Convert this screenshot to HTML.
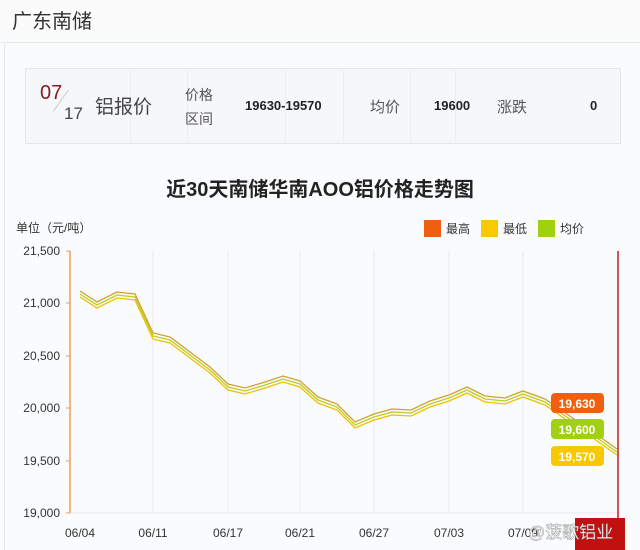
<!DOCTYPE html>
<html><head><meta charset="utf-8"><style>
body{margin:0;width:640px;height:550px;overflow:hidden;background:#fafbfc;font-family:"Liberation Sans","Noto Sans CJK SC",sans-serif;position:relative}
.abs{position:absolute}
</style></head><body>
<div class="abs" style="left:0;top:0;width:640px;height:42px;background:#fbfbfc;border-bottom:1px solid #e8e9ec"></div>
<div class="abs" style="left:12px;top:5px;font-size:20px;color:#333">广东南储</div>
<div class="abs" style="left:4px;top:43px;width:636px;height:507px;background:#fafbfd;border-left:1px solid #e6e7ea"></div>
<div class="abs" style="left:25px;top:68px;width:594px;height:74px;background:#f6f7fa;border:1px solid #e4e6ea"></div>
<div class="abs" style="left:130px;top:70px;width:1px;height:72px;background:#eceef2"></div>
<div class="abs" style="left:187px;top:70px;width:1px;height:72px;background:#eceef2"></div>
<div class="abs" style="left:285px;top:70px;width:1px;height:72px;background:#eceef2"></div>
<div class="abs" style="left:343px;top:70px;width:1px;height:72px;background:#eceef2"></div>
<div class="abs" style="left:410px;top:70px;width:1px;height:72px;background:#eceef2"></div>
<div class="abs" style="left:455px;top:70px;width:1px;height:72px;background:#eceef2"></div>
<div class="abs" style="left:40px;top:82px;font-size:20px;color:#8b1a1a">07</div>
<div class="abs" style="left:64px;top:104px;font-size:17px;color:#444">17</div>
<div class="abs" style="left:48px;top:100px;width:26px;height:1px;background:#ccc;transform:rotate(-55deg)"></div>
<div class="abs" style="left:95px;top:92px;font-size:19px;color:#444">铝报价</div>
<div class="abs" style="left:185px;top:83px;font-size:14px;color:#555;line-height:24px">价格<br>区间</div>
<div class="abs" style="left:245px;top:98px;font-size:13px;color:#222;font-weight:bold">19630-19570</div>
<div class="abs" style="left:370px;top:96px;font-size:15px;color:#555">均价</div>
<div class="abs" style="left:434px;top:98px;font-size:13px;color:#222;font-weight:bold">19600</div>
<div class="abs" style="left:497px;top:96px;font-size:15px;color:#555">涨跌</div>
<div class="abs" style="left:590px;top:98px;font-size:13px;color:#222;font-weight:bold">0</div>
<div class="abs" style="left:0;top:173px;width:640px;text-align:center;font-size:20px;font-weight:bold;color:#222">近30天南储华南AOO铝价格走势图</div>
<div class="abs" style="left:16px;top:219px;font-size:12px;color:#333">单位（元/吨）</div>
<svg class="abs" style="left:0;top:0" width="640" height="550">
<g stroke="#e8eaf0" stroke-width="1">
<line x1="153" y1="251" x2="153" y2="513"/><line x1="228" y1="251" x2="228" y2="513"/><line x1="300" y1="251" x2="300" y2="513"/><line x1="374" y1="251" x2="374" y2="513"/><line x1="449" y1="251" x2="449" y2="513"/><line x1="523" y1="251" x2="523" y2="513"/><line x1="70" y1="513" x2="620" y2="513"/>
</g>
<line x1="70" y1="251" x2="70" y2="513" stroke="#e8a060" stroke-width="1.5"/>
<g stroke="#e8a060"><line x1="66" y1="251" x2="70" y2="251"/><line x1="66" y1="303" x2="70" y2="303"/><line x1="66" y1="356" x2="70" y2="356"/><line x1="66" y1="408" x2="70" y2="408"/><line x1="66" y1="461" x2="70" y2="461"/><line x1="66" y1="513" x2="70" y2="513"/></g>
<g font-size="12" fill="#333" text-anchor="end" font-family="Liberation Sans,sans-serif">
<text x="60" y="255">21,500</text><text x="60" y="307">21,000</text><text x="60" y="360">20,500</text><text x="60" y="412">20,000</text><text x="60" y="465">19,500</text><text x="60" y="517">19,000</text></g>
<g font-size="12" fill="#333" text-anchor="middle" font-family="Liberation Sans,sans-serif">
<text x="80" y="537">06/04</text><text x="153" y="537">06/11</text><text x="228" y="537">06/17</text><text x="300" y="537">06/21</text><text x="374" y="537">06/27</text><text x="449" y="537">07/03</text><text x="523" y="537">07/09</text></g>
<g fill="none" stroke-width="1.3">
<polyline stroke="#d4a030" transform="translate(0,-3)" points="80,294 97,305 117,295 135,297 153,336 170,340 190,355 210,370 228,387 245,391 265,385 283,379 300,384 318,400 337,407 355,425 374,417 392,412 411,413 430,404 449,398 467,390 485,399 505,401 523,394 545,402 600,440 617,452"/>
<polyline stroke="#b8d020" points="80,294 97,305 117,295 135,297 153,336 170,340 190,355 210,370 228,387 245,391 265,385 283,379 300,384 318,400 337,407 355,425 374,417 392,412 411,413 430,404 449,398 467,390 485,399 505,401 523,394 545,402 600,440 617,452"/>
<polyline stroke="#f0c000" transform="translate(0,3)" points="80,294 97,305 117,295 135,297 153,336 170,340 190,355 210,370 228,387 245,391 265,385 283,379 300,384 318,400 337,407 355,425 374,417 392,412 411,413 430,404 449,398 467,390 485,399 505,401 523,394 545,402 600,440 617,452"/>
</g>
<line x1="618" y1="251" x2="618" y2="520" stroke="#c02020" stroke-width="1.5"/>
<rect x="575" y="518" width="50" height="32" fill="#c01010"/>
<rect x="424" y="220" width="17" height="17" fill="#f06010"/><text x="446" y="233" font-size="12" fill="#333">最高</text>
<rect x="481" y="220" width="17" height="17" fill="#f8c800"/><text x="503" y="233" font-size="12" fill="#333">最低</text>
<rect x="538" y="220" width="17" height="17" fill="#a0d010"/><text x="560" y="233" font-size="12" fill="#333">均价</text>
<g font-size="12" fill="#fff" font-weight="bold" text-anchor="middle" font-family="Liberation Sans,sans-serif">
<rect x="551" y="393" width="53" height="20" rx="4" fill="#f06010"/><text x="577" y="408">19,630</text>
<rect x="551" y="419" width="53" height="20" rx="4" fill="#a0d010"/><text x="577" y="434">19,600</text>
<rect x="551" y="446" width="53" height="20" rx="4" fill="#f8c800"/><text x="577" y="461">19,570</text></g>
<text x="528" y="538" font-size="17" fill="#fff" stroke="#888" stroke-width="0.4">@菠歌铝业</text>
</svg>
</body></html>
